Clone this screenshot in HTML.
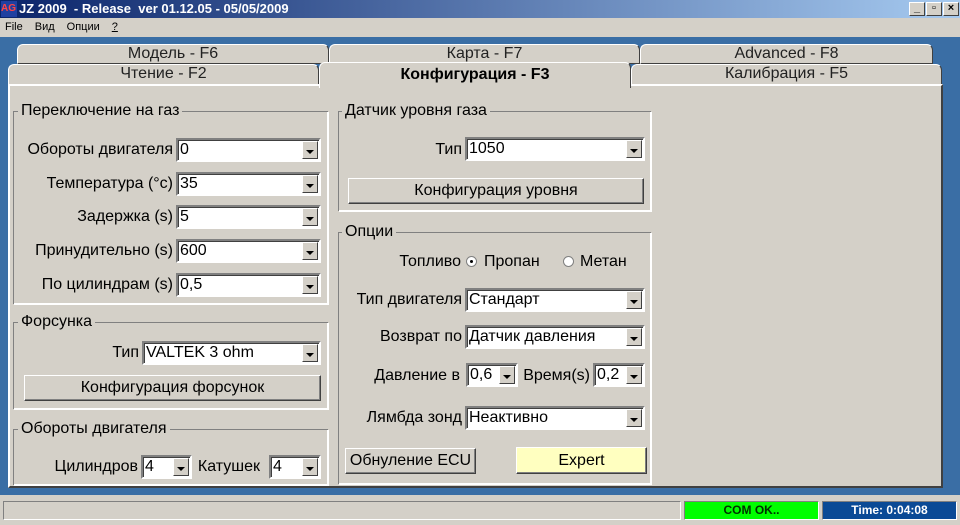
<!DOCTYPE html>
<html><head><meta charset="utf-8"><style>
*{box-sizing:border-box;margin:0;padding:0}
body{width:960px;height:525px;overflow:hidden;background:#3a6ea5;font-family:"Liberation Sans",sans-serif;font-size:16px;color:#000;position:relative}
.a{position:absolute}
.title{left:0;top:0;width:960px;height:18px;background:linear-gradient(90deg,#0a246a,#a6caf0);color:#fff;font-weight:bold;font-size:13px;line-height:18px}
.menu{left:0;top:18px;width:960px;height:19px;background:#d4d0c8;font-size:11px;line-height:18px}
.wb{top:2px;width:16px;height:14px;background:#d4d0c8;border:1px solid;border-color:#fff #404040 #404040 #fff;font-size:11px;font-weight:bold;line-height:11px;text-align:center;color:#000}
.tab{background:#d4d0c8;border:1px solid #404040;border-top-color:#fff;border-left-color:#fff;border-radius:6px 6px 0 0;text-align:center;font-size:16px;line-height:17px;color:#222}
.panel{left:8px;top:84px;width:935px;height:404px;background:#d4d0c8;border:2px solid;border-color:#fff #404040 #404040 #fff}
.grp{box-shadow:inset 1px 1px #808080,inset -1px -1px #fff,1px 1px #fff}
.lg{background:#d4d0c8;padding:0 3px;line-height:16px}
.cb{background:#fff;border:2px solid;border-color:#808080 #fff #fff #808080;box-shadow:inset 1px 1px #404040;line-height:20px;padding-left:2px}
.cb i{position:absolute;right:1px;top:1px;bottom:1px;width:16px;background:#d4d0c8;border:1px solid;border-color:#fff #404040 #404040 #fff;font-style:normal}
.cb i:after{content:"";position:absolute;left:3px;top:8px;border:4px solid transparent;border-top:4px solid #000;border-bottom:0}
.lb{text-align:right;line-height:18px;white-space:nowrap}
.bt{background:#d4d0c8;border:1px solid;border-color:#fff #404040 #404040 #fff;box-shadow:inset -1px -1px #808080;text-align:center}
.rd{width:11px;height:11px;border-radius:50%;background:#fff;border:1px solid #808080}
.sb{height:19px;border:1px solid;border-color:#808080 #fff #fff #808080;font-size:12px;font-weight:bold;text-align:center;line-height:17px}
</style></head><body>
<div class="a title"><span style="display:inline-block;width:16px;height:16px;background:#2040a0;color:#f44;font-size:10px;vertical-align:top;margin:1px 2px 0 1px;line-height:16px">AG</span>JZ 2009 &nbsp;- Release &nbsp;ver 01.12.05 - 05/05/2009</div>
<div class="a wb" style="left:909px">_</div><div class="a wb" style="left:926px">▫</div><div class="a wb" style="left:943px">×</div>
<div class="a menu"><span style="margin-left:5px">File</span><span style="margin-left:12px">Вид</span><span style="margin-left:12px">Опции</span><span style="margin-left:12px;text-decoration:underline">?</span></div>

<div class="a tab" style="left:17px;top:44px;width:312px;height:20px">Модель - F6</div>
<div class="a tab" style="left:329px;top:44px;width:311px;height:20px">Карта - F7</div>
<div class="a tab" style="left:640px;top:44px;width:293px;height:20px">Advanced - F8</div>
<div class="a tab" style="left:8px;top:64px;width:311px;height:21px">Чтение - F2</div>
<div class="a tab" style="left:631px;top:64px;width:311px;height:21px">Калибрация - F5</div>
<div class="a panel"></div>
<div class="a tab" style="left:319px;top:62px;width:312px;height:26px;border-bottom:none;font-weight:bold;line-height:24px;color:#000">Конфигурация - F3</div>

<div class="a grp" style="left:13px;top:111px;width:315px;height:193px"></div>
<div class="a lg" style="left:18px;top:103px">Переключение на газ</div>
<div class="a lb" style="left:14px;top:141px;width:159px">Обороты двигателя</div>
<div class="a cb" style="left:176px;top:138px;width:145px;height:24px">0<i></i></div>
<div class="a lb" style="left:14px;top:175px;width:159px">Температура (°c)</div>
<div class="a cb" style="left:176px;top:172px;width:145px;height:24px">35<i></i></div>
<div class="a lb" style="left:14px;top:208px;width:159px">Задержка (s)</div>
<div class="a cb" style="left:176px;top:205px;width:145px;height:24px">5<i></i></div>
<div class="a lb" style="left:14px;top:242px;width:159px">Принудительно (s)</div>
<div class="a cb" style="left:176px;top:239px;width:145px;height:24px">600<i></i></div>
<div class="a lb" style="left:14px;top:276px;width:159px">По цилиндрам (s)</div>
<div class="a cb" style="left:176px;top:273px;width:145px;height:24px">0,5<i></i></div>

<div class="a grp" style="left:13px;top:322px;width:315px;height:87px"></div>
<div class="a lg" style="left:18px;top:314px">Форсунка</div>
<div class="a lb" style="left:60px;top:344px;width:79px">Тип</div>
<div class="a cb" style="left:142px;top:341px;width:179px;height:24px">VALTEK 3 ohm<i></i></div>
<div class="a bt" style="left:24px;top:375px;width:297px;height:26px;line-height:24px">Конфигурация форсунок</div>

<div class="a grp" style="left:13px;top:429px;width:315px;height:56px"></div>
<div class="a lg" style="left:18px;top:421px">Обороты двигателя</div>
<div class="a lb" style="left:40px;top:458px;width:98px">Цилиндров</div>
<div class="a cb" style="left:141px;top:455px;width:51px;height:24px">4<i></i></div>
<div class="a lb" style="left:196px;top:458px;width:64px">Катушек</div>
<div class="a cb" style="left:269px;top:455px;width:52px;height:24px">4<i></i></div>

<div class="a grp" style="left:338px;top:111px;width:313px;height:100px"></div>
<div class="a lg" style="left:342px;top:103px">Датчик уровня газа</div>
<div class="a lb" style="left:400px;top:141px;width:62px">Тип</div>
<div class="a cb" style="left:465px;top:137px;width:180px;height:24px">1050<i></i></div>
<div class="a bt" style="left:348px;top:178px;width:296px;height:26px;line-height:24px">Конфигурация уровня</div>

<div class="a grp" style="left:338px;top:232px;width:313px;height:252px"></div>
<div class="a lg" style="left:342px;top:224px">Опции</div>
<div class="a lb" style="left:370px;top:253px;width:91px">Топливо</div>
<div class="a rd" style="left:466px;top:256px"><div class="a" style="left:3px;top:3px;width:3px;height:3px;background:#000;border-radius:50%"></div></div>
<div class="a" style="left:484px;top:253px;line-height:18px">Пропан</div>
<div class="a rd" style="left:563px;top:256px"></div>
<div class="a" style="left:580px;top:253px;line-height:18px">Метан</div>
<div class="a lb" style="left:340px;top:291px;width:122px">Тип двигателя</div>
<div class="a cb" style="left:465px;top:288px;width:180px;height:24px">Стандарт<i></i></div>
<div class="a lb" style="left:340px;top:328px;width:122px">Возврат по</div>
<div class="a cb" style="left:465px;top:325px;width:180px;height:24px">Датчик давления<i></i></div>
<div class="a lb" style="left:340px;top:367px;width:120px">Давление в</div>
<div class="a cb" style="left:466px;top:363px;width:52px;height:24px">0,6<i></i></div>
<div class="a lb" style="left:520px;top:367px;width:70px">Время(s)</div>
<div class="a cb" style="left:593px;top:363px;width:52px;height:24px">0,2<i></i></div>
<div class="a lb" style="left:340px;top:409px;width:122px">Лямбда зонд</div>
<div class="a cb" style="left:465px;top:406px;width:180px;height:24px">Неактивно<i></i></div>
<div class="a bt" style="left:345px;top:448px;width:131px;height:26px;line-height:24px">Обнуление ECU</div>
<div class="a bt" style="left:516px;top:447px;width:131px;height:27px;line-height:25px;background:#ffffc0">Expert</div>

<div class="a" style="left:0;top:495px;width:960px;height:30px;background:#d4d0c8"></div>
<div class="a sb" style="left:3px;top:501px;width:678px"></div>
<div class="a sb" style="left:684px;top:501px;width:135px;background:#00ff00;color:#003000">COM OK..</div>
<div class="a sb" style="left:822px;top:501px;width:135px;background:#0a4a96;color:#fff">Time: 0:04:08</div>
</body></html>
